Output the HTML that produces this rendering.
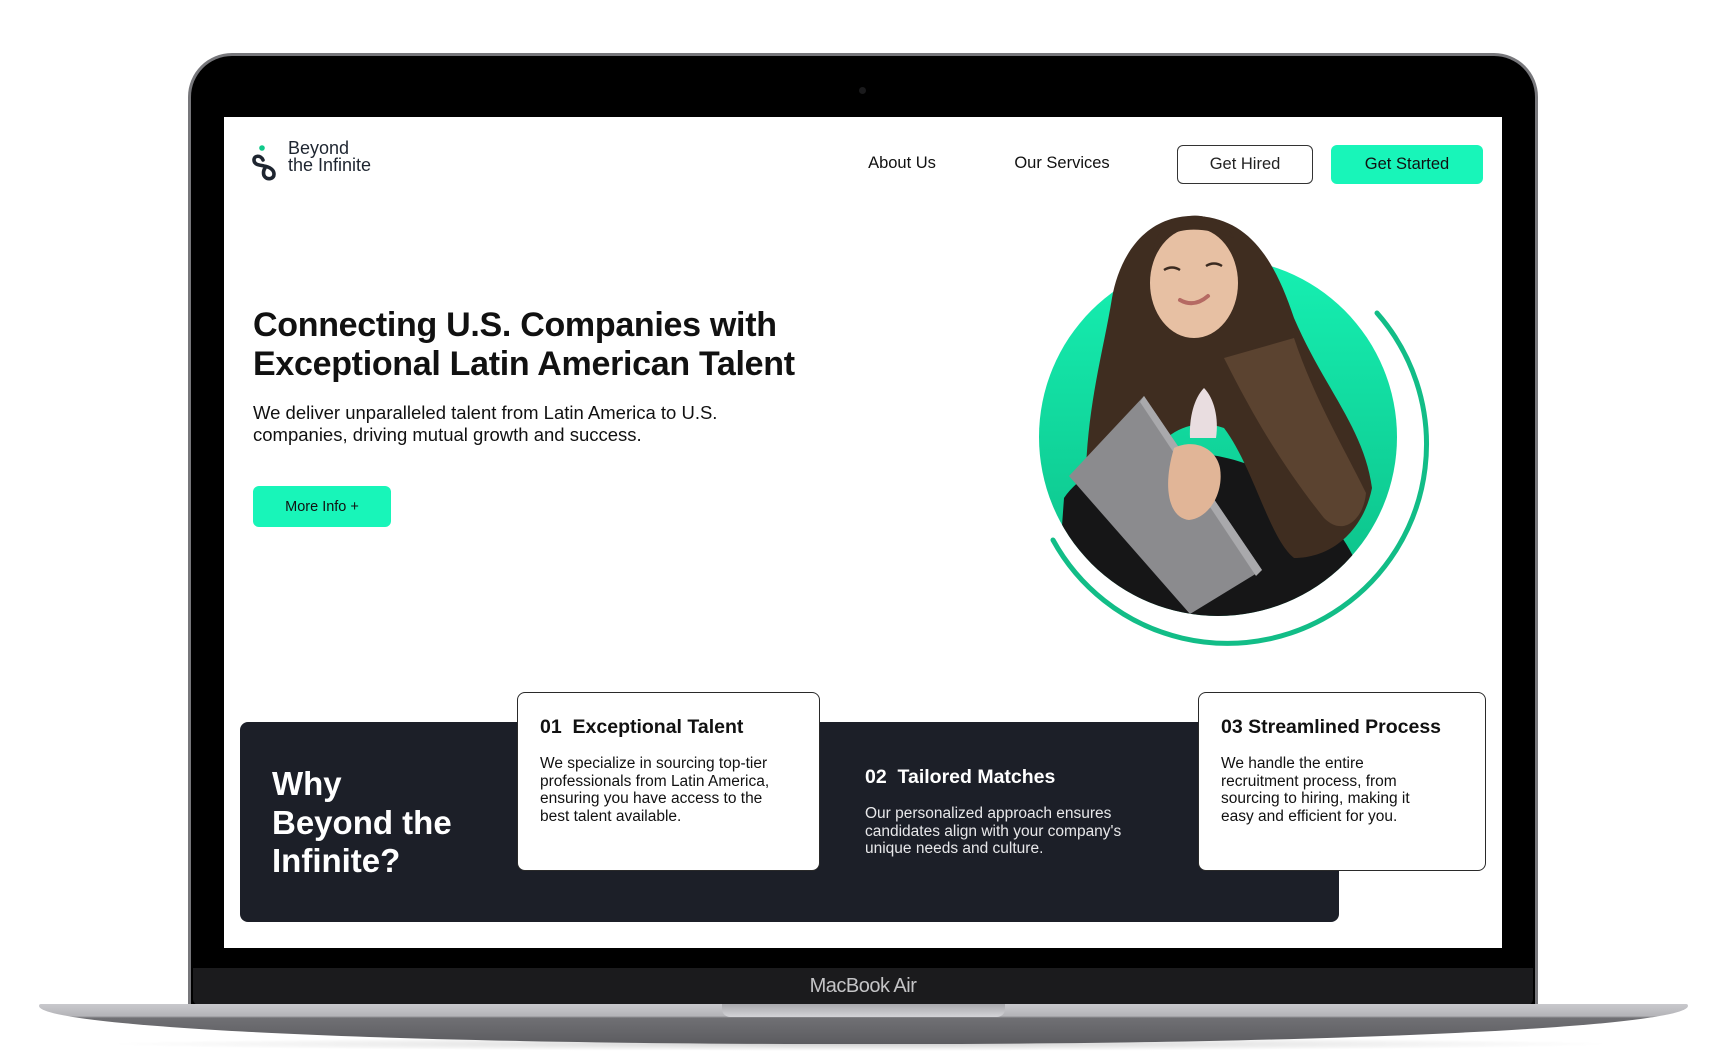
<!DOCTYPE html>
<html><head><meta charset="utf-8">
<style>
*{margin:0;padding:0;box-sizing:border-box}
body{width:1726px;height:1064px;background:#fff;position:relative;overflow:hidden;font-family:"Liberation Sans",Arial,sans-serif;color:#111}
.abs{position:absolute}
.lid{left:188px;top:53px;width:1350px;height:960px;border-radius:44px 44px 0 0;background:#000;border:3px solid #77777b;border-bottom:none}
.screen{left:224px;top:117px;width:1278px;height:831px;background:#fff;overflow:hidden}
.chin{left:193px;top:968px;width:1340px;height:37px;background:#1b1b1d;border-radius:0 0 6px 6px;color:#c4c4c6;font-size:20px;text-align:center;line-height:36px;letter-spacing:-0.5px}
.base{left:39px;top:1004px;width:1649px;height:40px;background:linear-gradient(#c9c9cd 0,#b4b4b8 12px,#707074 14px,#5c5c60 100%);border-radius:2px 2px 50% 50%/2px 2px 100% 100%}
.notch{left:722px;top:1004px;width:283px;height:13px;background:linear-gradient(#a8a8ac,#d4d4d8);border-radius:0 0 8px 8px}
.shadow{left:100px;top:1037px;width:1520px;height:14px;background:radial-gradient(ellipse at center,rgba(0,0,0,.18),rgba(0,0,0,0) 70%)}
.nav{font-size:16.5px;color:#111}
.btn{border-radius:6px;font-size:16.5px;display:flex;align-items:center;justify-content:center}
h1{font-size:34px;line-height:39px;font-weight:700;letter-spacing:-0.3px}
.sub{font-size:18.5px;line-height:22px}
.panel{background:#1c1f28;border-radius:8px}
.card{background:#fff;border:1px solid #2a2a2a;border-radius:8px}
.ct{font-size:19.5px;font-weight:700;line-height:24px}
.cb{font-size:15.5px;line-height:17.5px}
</style></head><body>
<div class="abs shadow"></div>
<div class="abs lid"></div>
<div class="abs" style="left:859px;top:87px;width:7px;height:7px;border-radius:50%;background:#1a1a1c"></div>
<div class="abs chin">MacBook Air</div>
<div class="abs base"></div>
<div class="abs notch"></div>

<div class="abs screen">
  <!-- logo -->
  <svg class="abs" style="left:26px;top:26px" width="34" height="40" viewBox="0 0 34 40">
    <circle cx="12" cy="5" r="2.8" fill="#10c98a"/>
    <path d="M13 17 C11 12 4 12 4 17 C4 22 10 22 14 23 C20 24 24 27 24 31 C24 36 18 37 15 34 C13 32 13 28 15 25" fill="none" stroke="#1e2530" stroke-width="3.6" stroke-linecap="round"/>
  </svg>
  <div class="abs" style="left:64px;top:23px;font-size:18px;line-height:17px;color:#1e2530">Beyond<br>the Infinite</div>

  <div class="abs nav" style="left:639px;top:37px;width:78px;text-align:center">About Us</div>
  <div class="abs nav" style="left:783px;top:37px;width:110px;text-align:center">Our Services</div>
  <div class="abs btn" style="left:953px;top:28px;width:136px;height:39px;border:1.5px solid #333;color:#222">Get Hired</div>
  <div class="abs btn" style="left:1107px;top:28px;width:152px;height:39px;background:#18f5b9;color:#111">Get Started</div>

  <h1 class="abs" style="left:29px;top:189px">Connecting U.S. Companies with<br>Exceptional Latin American Talent</h1>
  <div class="abs sub" style="left:29px;top:285px">We deliver unparalleled talent from Latin America to U.S.<br>companies, driving mutual growth and success.</div>
  <div class="abs btn" style="left:29px;top:369px;width:138px;height:41px;background:#18f5b9;font-size:14.5px">More Info +</div>

  <div class="abs panel" style="left:16px;top:605px;width:1099px;height:200px"></div>
  <div class="abs" style="left:48px;top:648px;font-size:33px;line-height:38.5px;font-weight:700;color:#fff">Why<br>Beyond the<br>Infinite?</div>

  <div class="abs card" style="left:293px;top:575px;width:303px;height:179px"></div>
  <div class="abs ct" style="left:316px;top:598px">01&nbsp; Exceptional Talent</div>
  <div class="abs cb" style="left:316px;top:638px;width:255px">We specialize in sourcing top-tier professionals from Latin America, ensuring you have access to the best talent available.</div>

  <div class="abs ct" style="left:641px;top:648px;color:#fff">02&nbsp; Tailored Matches</div>
  <div class="abs cb" style="left:641px;top:688px;color:#e8e8ea;width:300px">Our personalized approach ensures candidates align with your company's unique needs and culture.</div>

  <div class="abs card" style="left:974px;top:575px;width:288px;height:179px"></div>
  <div class="abs ct" style="left:997px;top:598px">03 Streamlined Process</div>
  <div class="abs cb" style="left:997px;top:638px;width:218px">We handle the entire recruitment process, from sourcing to hiring, making it easy and efficient for you.</div>
</div>

<!-- hero image -->
<svg class="abs" style="left:-6px;top:-2px" width="1726" height="1064" viewBox="0 0 1726 1064">
  <defs>
    <linearGradient id="g" x1="0" y1="0" x2="0" y2="1">
      <stop offset="0" stop-color="#16f0b2"/><stop offset="1" stop-color="#0cbd86"/>
    </linearGradient>
    <clipPath id="c"><circle cx="1224" cy="439" r="179"/><rect x="1040" y="200" width="370" height="240"/></clipPath>
    <clipPath id="c2"><circle cx="1224" cy="439" r="179"/></clipPath>
  </defs>
  <circle cx="1224" cy="439" r="179" fill="url(#g)"/>
  <path d="M1383 315 A199 199 0 1 1 1059 542" fill="none" stroke="#12bd87" stroke-width="5" stroke-linecap="round"/>
  <g clip-path="url(#c2)">
    <path d="M1070 500 C1090 470 1140 450 1200 455 C1270 460 1330 500 1360 560 L1360 640 L1060 640 Z" fill="#161617"/>
  </g>
  <g clip-path="url(#c)">
    <path d="M1205 218 C1150 215 1125 260 1118 300 C1110 350 1095 400 1092 470 C1100 500 1130 500 1150 470 C1170 430 1200 420 1230 430 C1260 470 1275 540 1300 560 C1340 560 1370 530 1378 490 C1370 430 1330 390 1300 320 C1280 260 1255 222 1205 218 Z" fill="#3f2d20"/>
    <path d="M1230 360 C1260 420 1290 470 1330 520 C1350 540 1370 520 1372 495 C1350 450 1320 400 1300 340 Z" fill="#5b4330"/>
    <ellipse cx="1200" cy="285" rx="44" ry="55" fill="#e7c0a3"/>
    <path d="M1160 255 C1170 230 1200 225 1240 240 C1235 228 1215 215 1195 218 C1170 222 1158 240 1160 255Z" fill="#3f2d20"/>
    <path d="M1186 302 Q1200 310 1214 298" stroke="#b56a63" stroke-width="4" fill="none" stroke-linecap="round"/>
    <path d="M1170 272 q8 -5 16 0 M1212 268 q8 -5 16 0" stroke="#3a2a20" stroke-width="2.5" fill="none"/>
    <path d="M1210 390 C1220 400 1225 420 1222 440 L1196 440 C1195 420 1200 400 1210 390Z" fill="#e9dde0"/>
  </g>
  <g clip-path="url(#c2)">
    <path d="M1075 478 L1150 398 L1268 572 L1196 616 Z" fill="#8b8b8e"/>
    <path d="M1150 398 L1268 572 L1262 578 L1146 404 Z" fill="#a9a9ac"/>
    <path d="M1180 450 C1200 440 1222 450 1226 470 C1230 495 1215 520 1195 522 C1175 520 1168 490 1180 450Z" fill="#e1b597"/>
  </g>
</svg>
</body></html>
